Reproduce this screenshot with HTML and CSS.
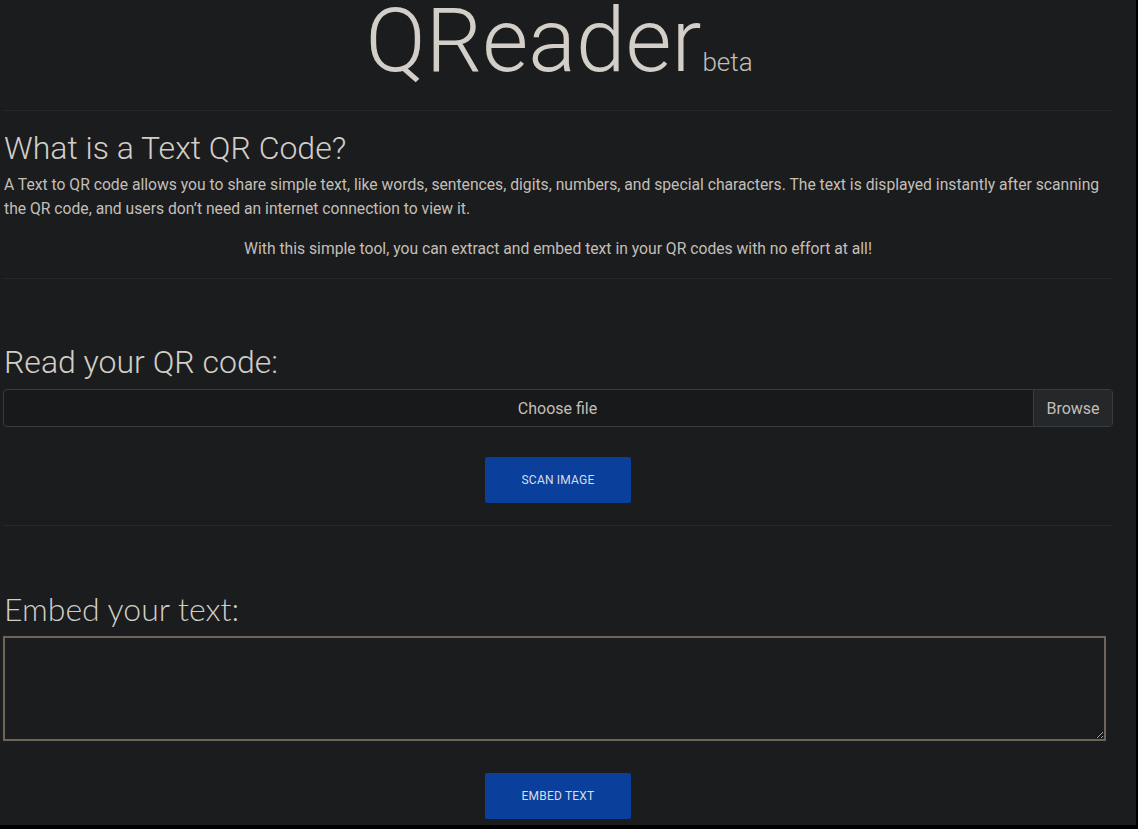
FILE: index.html
```html
<!DOCTYPE html>
<html lang="en">
<head>
<meta charset="utf-8">
<title>QReader</title>
<link rel="stylesheet" href="styles.css">
</head>
<body>
<div class="page">
  <div class="container">
    <header class="brand">
      <h1 class="title">QReader<small class="beta">beta</small></h1>
    </header>
    <hr class="rule">
    <section class="intro">
      <h2 class="heading">What is a Text QR Code?</h2>
      <p class="lead">A Text to QR code allows you to share simple text, like words, sentences, digits, numbers, and special characters. The text is displayed instantly after scanning the QR code, and users don’t need an internet connection to view it.</p>
      <p class="center">With this simple tool, you can extract and embed text in your QR codes with no effort at all!</p>
    </section>
    <hr class="rule">
    <section class="block read">
      <h2 class="heading">Read your QR code:</h2>
      <div class="file">
        <span class="file-label">Choose file</span>
        <span class="file-btn">Browse</span>
      </div>
      <div class="actions"><button class="btn">Scan image</button></div>
    </section>
    <hr class="rule">
    <section class="block embed">
      <h2 class="heading alt">Embed your text:</h2>
      <textarea class="area"></textarea>
      <div class="actions"><button class="btn">Embed text</button></div>
    </section>
  </div>
</div>
</body>
</html>
```

FILE: styles.css
```css
html {
  background: #000;
}
body {
  margin: 0;
  background: #000;
  font-family: Roboto, "Liberation Sans", sans-serif;
}
.page {
  width: 1136px;
  height: 825px;
  overflow: hidden;
  background: #1b1c1e;
  color: #cbc7c0;
}
.container {
  width: 1110px;
  margin-left: 3px;
}
.brand {
  text-align: center;
  height: 110px;
}
.title {
  margin: 0;
  font-weight: 300;
  font-size: 89px;
  line-height: 82px;
  color: #d3cfc8;
  padding-left: 2px;
}
.beta {
  font-size: 26px;
  font-weight: 300;
  margin-left: 1px;
  color: #c3bfb8;
}
.rule {
  margin: 0;
  border: 0;
  border-top: 1px solid #26282a;
}
.intro {
  padding-top: 18px;
  padding-bottom: 17px;
}
.heading {
  margin: 0 0 6px 1px;
  font-weight: 300;
  font-size: 32px;
  line-height: 38px;
  color: #d2cec7;
}
.heading.alt {
  font-family: Lato, Roboto, sans-serif;
}
.lead {
  margin: 0 0 16px 1px;
  font-size: 15.7px;
  line-height: 24px;
  font-weight: 400;
  color: #c3bfb8;
}
.center {
  margin: 0;
  text-align: center;
  font-size: 15.7px;
  line-height: 24px;
  color: #c3bfb8;
}
.block {
  padding-top: 64px;
  padding-bottom: 22px;
}
.file {
  display: flex;
  height: 38px;
  border: 1px solid #3a3d40;
  border-radius: 4px;
  background: #18191b;
  box-sizing: border-box;
  margin-top: 8px;
  overflow: hidden;
}
.file-label {
  flex: 1;
  display: flex;
  align-items: center;
  justify-content: center;
  padding-left: 78px;
  font-size: 16px;
  color: #c3bfb8;
}
.file-btn {
  width: 78px;
  display: flex;
  align-items: center;
  justify-content: center;
  border-left: 1px solid #3a3d40;
  background: #25282a;
  font-size: 16px;
  color: #c3bfb8;
}
.actions {
  display: flex;
  justify-content: center;
  margin-top: 30px;
}
.btn {
  width: 146px;
  height: 46px;
  border: 0;
  border-radius: 2px;
  background: #0a409c;
  color: #d9dde6;
  font-family: Roboto, "Liberation Sans", sans-serif;
  font-size: 12px;
  text-transform: uppercase;
  letter-spacing: 0.2px;
  padding: 0;
}
.area {
  display: block;
  width: 1103px;
  height: 105px;
  box-sizing: border-box;
  margin-top: 8px;
  background: #1b1c1e;
  border: 2px solid #6d6558;
  resize: vertical;
}
.embed .actions {
  margin-top: 32px;
}
```
